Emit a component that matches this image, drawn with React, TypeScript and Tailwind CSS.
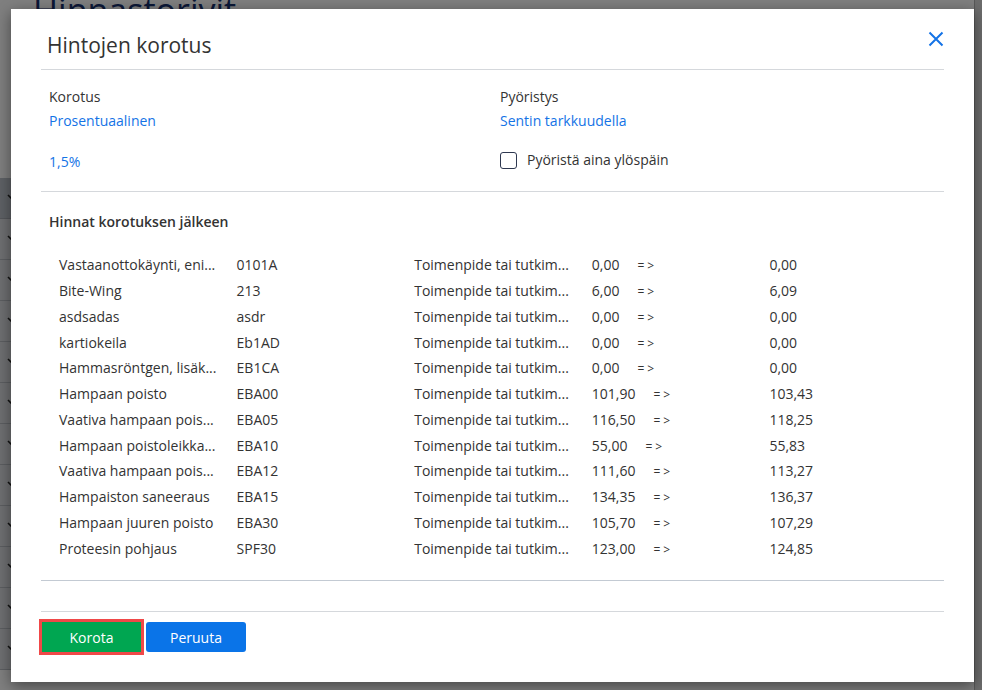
import React from "react";

const rows = [
  { name: "Vastaanottokäynti, eni...", code: "0101A", old: "0,00", next: "0,00" },
  { name: "Bite-Wing", code: "213", old: "6,00", next: "6,09" },
  { name: "asdsadas", code: "asdr", old: "0,00", next: "0,00" },
  { name: "kartiokeila", code: "Eb1AD", old: "0,00", next: "0,00" },
  { name: "Hammasröntgen, lisäk...", code: "EB1CA", old: "0,00", next: "0,00" },
  { name: "Hampaan poisto", code: "EBA00", old: "101,90", next: "103,43" },
  { name: "Vaativa hampaan pois...", code: "EBA05", old: "116,50", next: "118,25" },
  { name: "Hampaan poistoleikka...", code: "EBA10", old: "55,00", next: "55,83" },
  { name: "Vaativa hampaan pois...", code: "EBA12", old: "111,60", next: "113,27" },
  { name: "Hampaiston saneeraus", code: "EBA15", old: "134,35", next: "136,37" },
  { name: "Hampaan juuren poisto", code: "EBA30", old: "105,70", next: "107,29" },
  { name: "Proteesin pohjaus", code: "SPF30", old: "123,00", next: "124,85" },
];

const bgRows = [0, 1, 2, 3, 4, 5, 6, 7, 8, 9, 10];

function Chevron() {
  return (
    <svg width="14" height="14" viewBox="0 0 14 14" fill="none">
      <path d="M2 4l5 5 5-5" stroke="#222" strokeWidth="1.6" />
    </svg>
  );
}

export default function App() {
  return (
    <div
      className="relative h-[690px] w-full overflow-hidden bg-white text-[#333]"
      style={{ fontFamily: '"Open Sans", "Noto Sans", sans-serif' }}
    >
      {/* Page behind the dialog */}
      <div className="flex h-full">
        <div className="flex-1">
          <h1 className="-mt-[7px] h-[185px] pl-[33px] text-[34px] leading-[34px] text-[#16306e]">
            Hinnastorivit
          </h1>
          <div className="flex h-[41px] items-center border-b border-[#a8adb5] bg-[#bcc2ca] pl-[6px]">
            <Chevron />
          </div>
          {bgRows.map((r) => (
            <div
              key={r}
              className="flex h-[41px] items-center border-b border-[#b8bcc2] bg-[#dcdfe3] pl-[6px]"
            >
              <Chevron />
            </div>
          ))}
        </div>
        <div className="w-[8px] border-l border-[#b0b0b0] bg-[#d8d8d8]" />
      </div>

      {/* Overlay */}
      <div className="absolute inset-0 bg-black/50" />

      {/* Dialog */}
      <div className="absolute left-[11px] top-[9px] flex h-[673px] w-[963px] flex-col bg-white shadow-[0_4px_14px_rgba(0,0,0,0.45)]">
        <div className="flex h-[60px] items-start justify-between pl-[36px] pr-[30px] pt-[22px]">
          <h2 className="text-[21px] leading-[28px] text-[#333]">Hintojen korotus</h2>
          <svg width="16" height="16" viewBox="0 0 16 16">
            <path d="M1.5 1.5l13 13M14.5 1.5l-13 13" stroke="#1473e6" strokeWidth="2" />
          </svg>
        </div>
        <div className="mx-[30px] border-t border-[#d5d8dc]" />

        <div className="mx-[30px] grid h-[121px] grid-cols-[451px_1fr] pl-[8px] pt-[17px] text-[14px] leading-[20px]">
          <div>
            <div>Korotus</div>
            <div className="mt-[4px] text-[#1473e6]">Prosentuaalinen</div>
            <div className="mt-[21px] text-[#1473e6]">1,5%</div>
          </div>
          <div>
            <div>Pyöristys</div>
            <div className="mt-[4px] text-[#1473e6]">Sentin tarkkuudella</div>
            <label className="mt-[19px] flex items-center gap-[10px]">
              <span className="h-[17px] w-[17px] rounded-[3px] border-[1.5px] border-[#2e3850]" />
              <span>Pyöristä aina ylöspäin</span>
            </label>
          </div>
        </div>
        <div className="mx-[30px] border-t border-[#d5d8dc]" />

        <div className="mx-[30px] h-[388px] pl-[8px] pr-[7px] pt-[20px] text-[14px]">
          <div className="font-semibold leading-[20px]">Hinnat korotuksen jälkeen</div>
          <div className="mt-[20px]">
            {rows.map((r, i) => (
              <div key={i} className="grid h-[25.75px] grid-cols-5 items-center whitespace-nowrap">
                <span className="pl-[10px]">{r.name}</span>
                <span className="pl-[10px]">{r.code}</span>
                <span className="pl-[10px]">Toimenpide tai tutkim...</span>
                <span className="pl-[10px]">
                  {r.old}
                  <span className="ml-[18px] text-[12px] tracking-[3px]">=&gt;</span>
                </span>
                <span className="pl-[10px]">{r.next}</span>
              </div>
            ))}
          </div>
        </div>
        <div className="mx-[30px] border-t border-[#c3cad3]" />
        <div className="h-[30px]" />
        <div className="mx-[30px] border-t border-[#d5d8dc]" />

        <div className="mt-[10px] flex gap-[5px] pl-[31px] text-[14px]">
          <button className="h-[30px] w-[99px] bg-[#00a651] text-white outline-3 outline-[#f04848]">
            Korota
          </button>
          <button className="h-[30px] w-[100px] rounded-[3px] bg-[#0a74e8] text-white">
            Peruuta
          </button>
        </div>
      </div>
    </div>
  );
}
